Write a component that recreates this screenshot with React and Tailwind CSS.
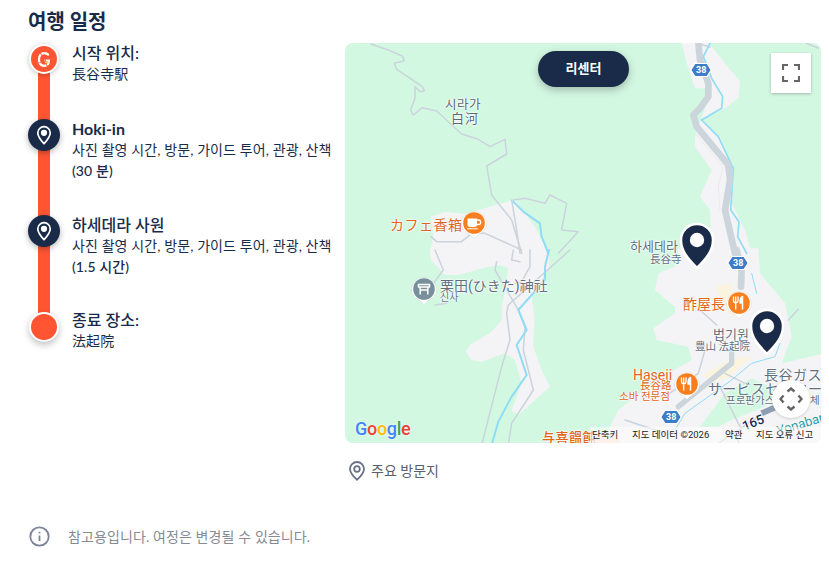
import React from "react";

const font = "font-['Lato','Noto_Sans_CJK_KR',sans-serif]";

function TimelinePin() {
  return (
    <span className="z-10 flex h-8 w-8 items-center justify-center rounded-full bg-[#1a2b49] shadow-[0_2px_6px_rgba(0,0,0,0.3)]">
      <svg width="16" height="20" viewBox="0 0 16 20" fill="none">
        <path d="M8 18.600C5 15.400 1.800 12 1.800 7.900a6.200 6.200 0 0 1 12.400 0C14.200 12 11 15.400 8 18.600Z" stroke="#fff" strokeWidth="1.700" />
        <circle cx="8" cy="7.800" r="3.100" fill="#fff" />
      </svg>
    </span>
  );
}

function Stop({ icon, title, children, className }) {
  return (
    <li className={`flex gap-3 ${className}`}>
      <div className="flex w-8 shrink-0 justify-center">{icon}</div>
      <div className="w-[264px]">
        <p className="text-[16px] leading-[20px] font-medium text-[#1a2b49]">{title}</p>
        <p className="text-[14px] leading-[21px] tracking-[0.1px] text-[#1a2b49]">{children}</p>
      </div>
    </li>
  );
}

function Label({ className, children }) {
  return (
    <span className={`absolute whitespace-nowrap leading-none font-['Roboto','Noto_Sans_CJK_KR',sans-serif] [text-shadow:0_0_2px_#fff,0_0_2px_#fff,0_0_2px_#fff,0_0_1px_#fff] ${className}`}>
      {children}
    </span>
  );
}

function Poi({ x, y, color, children }) {
  return (
    <g transform={`translate(${x} ${y})`}>
      <path d="M-12.500 1a12.500 12.500 0 1 1 25 0c0 5-4 8-8 10.500L0 15.500l-4.500-4C-8.500 9-12.500 6-12.500 1Z" fill="#fff" stroke="#00000022" strokeWidth="0.500" />
      <circle cx="0" cy="0" r="10.800" fill={color} />
      {children}
    </g>
  );
}

function Utensil() {
  return (
    <g fill="none" stroke="#fff" strokeLinecap="round">
      <path d="M-5.500 -6v3.500c0 1.500 1 2.300 2.200 2.300S-1 -1 -1 -2.500V-6M-3.300 -6v12" strokeWidth="1.300" />
      <path d="M3.500 6V-6.500c-2 1-2.500 3.500-2.500 6.500h2.500" strokeWidth="1.500" fill="#fff" />
    </g>
  );
}

function Shield({ x, y }) {
  return (
    <g transform={`translate(${x} ${y})`}>
      <path d="M-11 0l4.500-7h13L11 0l-4.500 7h-13Z" fill="#fff" />
      <path d="M-9.500 0l3.800-6h11.400L9.500 0l-3.800 6H-5.700Z" fill="#3d7bcb" />
    </g>
  );
}

function Pin({ x, y }) {
  return (
    <g transform={`translate(${x} ${y})`}>
      <path d="M0 28C-9 19-16 11-16 0a16 16 0 0 1 32 0C16 11 9 19 0 28Z" fill="#1a2b49" stroke="#fff" strokeWidth="2.500" />
      <circle cx="0" cy="0" r="7.200" fill="#fff" />
    </g>
  );
}

function MapDrawing() {
  return (
    <svg className="absolute inset-0 h-full w-full" viewBox="345 43 476 400" fill="none" strokeLinejoin="round" strokeLinecap="round">
      {/* land in pale grey */}
      <g fill="#f4f3f5">
        <g transform="translate(345 40) scale(0.3333)">
          <path d="M255 640L265 585L258 530L300 515L360 522L470 490L510 480L570 560L610 640Z" />
        </g>
        <g transform="translate(345 250) scale(0.3333)">
          <path d="M255 -5L258 30L300 75L339 75L429 51L465 45L489 55L480 126L470 170L470 210L440 245L375 285L362 305L380 330L410 335L480 310L510 330L530 400L500 480L520 495L615 410L590 360L565 290L568 200L560 140L612 50L612 -5Z" />
        </g>
        <g transform="translate(585 40) scale(0.3333)">
          <path d="M290 8L305 70L330 145L365 145L365 190L330 290L330 320L380 390L345 470L375 510L380 640L500 640L480 570L440 490L445 385L405 290L350 240L420 205L460 175L465 125L370 8Z" />
        </g>
        <g transform="translate(585 250) scale(0.3333)">
          <path d="M280 -5L270 50L220 70L210 120L270 170L270 190L205 235L215 270L310 290L320 330L200 400L100 480L70 540L0 570L0 590L720 590L720 310L590 340L620 260L600 160L525 70L520 -5Z" />
        </g>
      </g>
      <g transform="translate(585 250) scale(0.3333)">
        <path d="M390 110L440 100L445 210L420 170Z" fill="#faf3dd" />
        <path d="M355 375L440 325L500 320L430 380L380 400Z" fill="#faf3dd" />
        <path d="M345 530L420 430L500 385L575 420L540 470L440 510L400 530Z" fill="#d3f8e2" />
        <path d="M0 560L30 548L100 555L105 580L0 580Z" fill="#fbe5d6" />
      </g>

      {/* thin roads */}
      <g stroke="#cbd3dc" strokeWidth="1.500">
        <g transform="translate(345 40) scale(0.3333)" strokeWidth="4.500">
          <path d="M78 12L130 30L172 48L178 62L148 70L155 88L210 125L232 140L238 152L225 155L210 140L210 175L197 210L205 225L232 203L275 213L350 282L400 298L435 320L480 298L485 342L425 378L440 465L500 540L530 640" />
          <path d="M505 480L540 475L600 490L615 465L665 490L650 570L700 575L640 640M500 480L515 570L525 640" />
          <path d="M258 590L275 605L350 605L380 580L420 580L530 630" />
        </g>
        <g transform="translate(345 250) scale(0.3333)" strokeWidth="4.500">
          <path d="M675 0L490 165L485 190L495 270L470 350L410 585" />
          <path d="M455 35L450 60L520 180L540 230L535 300L565 420L500 520L490 585" />
          <path d="M525 35L500 30L505 0M555 0L555 50L530 95L510 100M270 0L295 60L265 100M270 165L305 160" />
        </g>
        <g transform="translate(585 250) scale(0.3333)" strokeWidth="4.500">
          <path d="M345 180L395 225M610 210L640 178M360 300L340 370L240 440M120 510L240 550M420 370L480 400M400 400L470 540M400 580L520 500" />
        </g>
        <path d="M700 44l10 3M806 43l12 5" />
      </g>

      {/* river */}
      <g stroke="#8fdcf4">
        <g transform="translate(585 40) scale(0.3333)" strokeWidth="5">
          <path d="M375 10L355 50L380 115L413 170L410 205L350 240L400 290L445 385L437 510L462 545L458 590L485 640" />
        </g>
        <g transform="translate(345 40) scale(0.3333)" strokeWidth="6">
          <path d="M505 485L535 515L585 550L590 590L610 640" />
        </g>
        <g transform="translate(345 250) scale(0.3333)" strokeWidth="6">
          <path d="M612 0L600 50L600 90L520 180L545 240L515 285L545 375L500 440L460 515L440 585" />
        </g>
        <g transform="translate(585 250) scale(0.3333)" strokeWidth="3">
          <path d="M500 70L515 130M585 280L570 320L500 340L440 390L300 490L270 540" />
        </g>
      </g>

      {/* main road */}
      <g transform="translate(585 40) scale(0.3333)" stroke="#cdd5dc" strokeWidth="20">
        <path d="M340 5L345 60L370 130L370 170L345 205L325 225L335 260L430 375L435 420L420 510L450 640" />
      </g>
      <g transform="translate(585 40) scale(0.3333)" stroke="#e6e9ed" strokeWidth="2.500">
        <path d="M335 285L415 380L400 440L405 510" />
      </g>
      <g transform="translate(585 250) scale(0.3333)">
        <path d="M455 0L470 60L468 110" stroke="#cdd5dc" strokeWidth="20" />
        <path d="M440 310L440 340L280 470" stroke="#cdd5dc" strokeWidth="16" />
        <path d="M530 490L580 468" stroke="#8f9fb3" strokeWidth="18" strokeLinecap="butt" />
        <path d="M440 540L470 590" stroke="#cdd5dc" strokeWidth="5" />
      </g>

      <Shield x={701} y={70} />
      <Shield x={738} y={263} />
      <Shield x={671} y={417} />

      <Poi x={474} y={223} color="#f97f1e">
        <path d="M-6.500 -4.500h9.500v6a2.500 2.500 0 0 1-2.500 2.500h-4.500a2.500 2.500 0 0 1-2.500-2.500Z" fill="#fff" />
        <path d="M3 -3h1.500a2 2 0 0 1 0 4.500H3" stroke="#fff" strokeWidth="1.300" />
        <path d="M-6.500 5.800h10" stroke="#fff" strokeWidth="1" />
      </Poi>
      <Poi x={424} y={289} color="#78909c">
        <path d="M-5.500 -4.500h11v2.500h-11ZM-3.800 -2v7.500M3.800 -2v7.500M-3.800 1h7.600" stroke="#fff" strokeWidth="1.500" strokeLinecap="butt" />
      </Poi>
      <Poi x={739} y={303} color="#f97f1e"><Utensil /></Poi>
      <Poi x={687} y={384} color="#f97f1e"><Utensil /></Poi>

      <Pin x={697} y={240} />
      <Pin x={767} y={326} />
    </svg>
  );
}

export default function App() {
  return (
    <div className={`h-[562px] w-[829px] overflow-hidden bg-white pl-7 pr-2 pt-[9px] ${font}`}>
      <h2 className="text-[20px] leading-[24px] font-bold text-[#1a2b49]">여행 일정</h2>

      <div className="mt-[10px] flex items-start">
        <ol className="relative w-[317px]">
          <span className="absolute left-[10px] top-4 h-[270px] w-3 bg-[#ff5533]" />
          <Stop
            className="relative h-[76px]"
            title="시작 위치:"
            icon={
              <span className="z-10 mt-px flex h-[30px] w-[30px] items-center justify-center rounded-full border-2 border-white bg-[#ff5533] shadow-[0_1px_5px_rgba(0,0,0,0.25)]">
                <svg width="14" height="15" viewBox="0 0 14 15" fill="none">
                  <path d="M11.500 3.500C11 2 9.200 1.200 7 1.200 4 1.200 2 3.500 2 7.500s2 6.300 5 6.300 5-2 5-5.300H7.500" stroke="#fff" strokeWidth="2.200" strokeDasharray="8 0.800" />
                  <path d="M8 10.500h3.500" stroke="#ffd633" strokeWidth="1.500" />
                </svg>
              </span>
            }
          >
            長谷寺駅
          </Stop>
          <Stop className="relative h-[96px]" title={<span className="font-bold">Hoki-in</span>} icon={<TimelinePin />}>
            사진 촬영 시간, 방문, 가이드 투어, 관광, 산책 <span className="font-medium">(30 분)</span>
          </Stop>
          <Stop className="relative h-[95px]" title="하세데라 사원" icon={<TimelinePin />}>
            사진 촬영 시간, 방문, 가이드 투어, 관광, 산책 <span className="font-medium">(1.5 시간)</span>
          </Stop>
          <Stop
            className="relative"
            title="종료 장소:"
            icon={<span className="z-10 mt-0.5 h-[30px] w-[30px] rounded-full border-2 border-white bg-[#ff5533] shadow-[0_3px_7px_rgba(0,0,0,0.25)]" />}
          >
            法起院
          </Stop>
        </ol>

        <div className="w-[476px]">
          <div className="relative h-[400px] w-[476px] overflow-hidden rounded-lg bg-[#d3f8e2]">
            <MapDrawing />

            <Label className="left-[100px] top-[56px] text-[12.500px] tracking-[0.5px] text-[#5d6874]">시라가</Label>
            <Label className="left-[106px] top-[69px] text-[13px] tracking-[1px] text-[#5d6874]">白河</Label>
            <Label className="left-[45px] top-[175px] text-[14px] tracking-[0.5px] text-[#e0651a]">カフェ香箱</Label>
            <Label className="left-[95px] top-[236px] text-[14px] text-[#5f6f7f]">栗田(ひきた)神社</Label>
            <Label className="left-[95px] top-[250px] text-[10px] text-[#5f6f7f]">신사</Label>
            <Label className="left-[285px] top-[197px] text-[13px] text-[#5f6f7f]">하세데라</Label>
            <Label className="left-[305px] top-[212px] text-[10.500px] text-[#5f6f7f]">長谷寺</Label>
            <Label className="left-[338px] top-[254px] text-[14px] text-[#e0651a]">酢屋長</Label>
            <Label className="left-[368px] top-[285px] text-[13px] text-[#5f6f7f]">법기원</Label>
            <Label className="left-[350px] top-[299px] text-[10.500px] text-[#5f6f7f]">豊山 法起院</Label>
            <Label className="left-[288px] top-[325px] text-[14px] text-[#e0651a]">Haseii</Label>
            <Label className="left-[295px] top-[338px] text-[10.500px] text-[#e0651a]">長谷路</Label>
            <Label className="left-[274px] top-[349px] text-[10.500px] text-[#e0651a]">소바 전문점</Label>
            <Label className="left-[419px] top-[325px] text-[14px] tracking-[0.5px] text-[#5f6f7f]">長谷ガス</Label>
            <Label className="left-[363px] top-[339px] text-[14px] tracking-[0.3px] text-[#5f6f7f]">サービスセンター</Label>
            <Label className="left-[381px] top-[353px] text-[10.500px] text-[#5f6f7f]">프로판가스</Label>
            <Label className="left-[465px] top-[353px] text-[10.500px] text-[#5f6f7f]">체</Label>
            <Label className="left-[197px] top-[388px] text-[13px] font-medium tracking-[0.5px] text-[#e0651a]">与喜饂飩</Label>
            <Label className="left-[397px] top-[373px] -rotate-[22deg] text-[13px] font-medium text-[#1a2b49]">165</Label>
            <Label className="left-[431px] top-[374px] -rotate-[17deg] text-[13px] text-[#2a9d9d]">Yonabari</Label>

            <span className="absolute left-[351px] top-[23px] text-[9px] leading-none font-bold text-white [font-family:Roboto]">38</span>
            <span className="absolute left-[388px] top-[216px] text-[9px] leading-none font-bold text-white [font-family:Roboto]">38</span>
            <span className="absolute left-[321px] top-[370px] text-[9px] leading-none font-bold text-white [font-family:Roboto]">38</span>

            <button className="absolute left-[193px] top-2 flex h-9 w-[91px] items-center justify-center rounded-[18px] bg-[#1a2b49] text-[13px] font-semibold text-white shadow-[0_3px_8px_rgba(0,0,0,0.25)]">
              리센터
            </button>

            <button className="absolute left-[426px] top-[10px] flex h-10 w-10 items-center justify-center bg-white shadow-[0_1px_3px_rgba(0,0,0,0.25)]">
              <svg width="18" height="18" viewBox="0 0 18 18" fill="none" stroke="#666" strokeWidth="2.200">
                <path d="M1 6V1h5M12 1h5v5M17 12v5h-5M6 17H1v-5" />
              </svg>
            </button>

            <div className="absolute left-[427px] top-[337px] flex h-[38px] w-[38px] items-center justify-center rounded-full bg-white shadow-[0_1px_3px_rgba(0,0,0,0.15)]">
              <svg width="24" height="24" viewBox="0 0 24 24" fill="none" stroke="#666" strokeWidth="2.400">
                <path d="M8.500 4.500L12 1.500l3.500 3M8.500 19.500l3.500 3 3.500-3M4.500 8.500L1.500 12l3 3.500M19.500 8.500l3 3.500-3 3.500" />
              </svg>
            </div>

            <div className="absolute bottom-[3px] left-[10px] flex text-[18px] leading-[22px] font-medium font-['Roboto',sans-serif] tracking-[-0.3px] [text-shadow:0_0_2px_#fff]">
              <span className="text-[#4285f4]">G</span>
              <span className="text-[#ea4335]">o</span>
              <span className="text-[#fbbc05]">o</span>
              <span className="text-[#4285f4]">g</span>
              <span className="text-[#34a853]">l</span>
              <span className="text-[#ea4335]">e</span>
            </div>

            <div className="absolute bottom-0 right-0 flex h-4 w-[231px] items-center bg-white/50 pl-[2px] text-[9.500px] leading-none text-[#222] font-['Roboto','Noto_Sans_CJK_KR',sans-serif]">
              <span className="w-10">단축키</span>
              <span className="w-[93px]">지도 데이터 ©2026</span>
              <span className="w-[31px]">약관</span>
              <span>지도 오류 신고</span>
            </div>
          </div>

          <div className="mt-[18px] flex items-center gap-[5px] pl-[3px] text-[14px] leading-5 text-[#585f70]">
            <svg width="18" height="20" viewBox="0 0 18 20" fill="none" stroke="#697186" strokeWidth="1.800">
              <path d="M9 18.800C5.500 15.500 2 12.500 2 8a7 7 0 0 1 14 0c0 4.500-3.500 7.500-7 10.800Z" />
              <circle cx="9" cy="8" r="2.800" />
            </svg>
            <span>주요 방문지</span>
          </div>
        </div>
      </div>

      <div className="mt-[45px] flex items-center gap-[18px] pl-px text-[14px] leading-5 tracking-[0.1px] text-[#858a94]">
        <svg width="21" height="21" viewBox="0 0 21 21" fill="none" stroke="#7d8396" strokeWidth="1.800">
          <circle cx="10.500" cy="10.500" r="9.200" />
          <path d="M10.500 9.500v5.500" />
          <path d="M10.500 5.800v1.600" />
        </svg>
        <span>참고용입니다. 여정은 변경될 수 있습니다.</span>
      </div>
    </div>
  );
}
